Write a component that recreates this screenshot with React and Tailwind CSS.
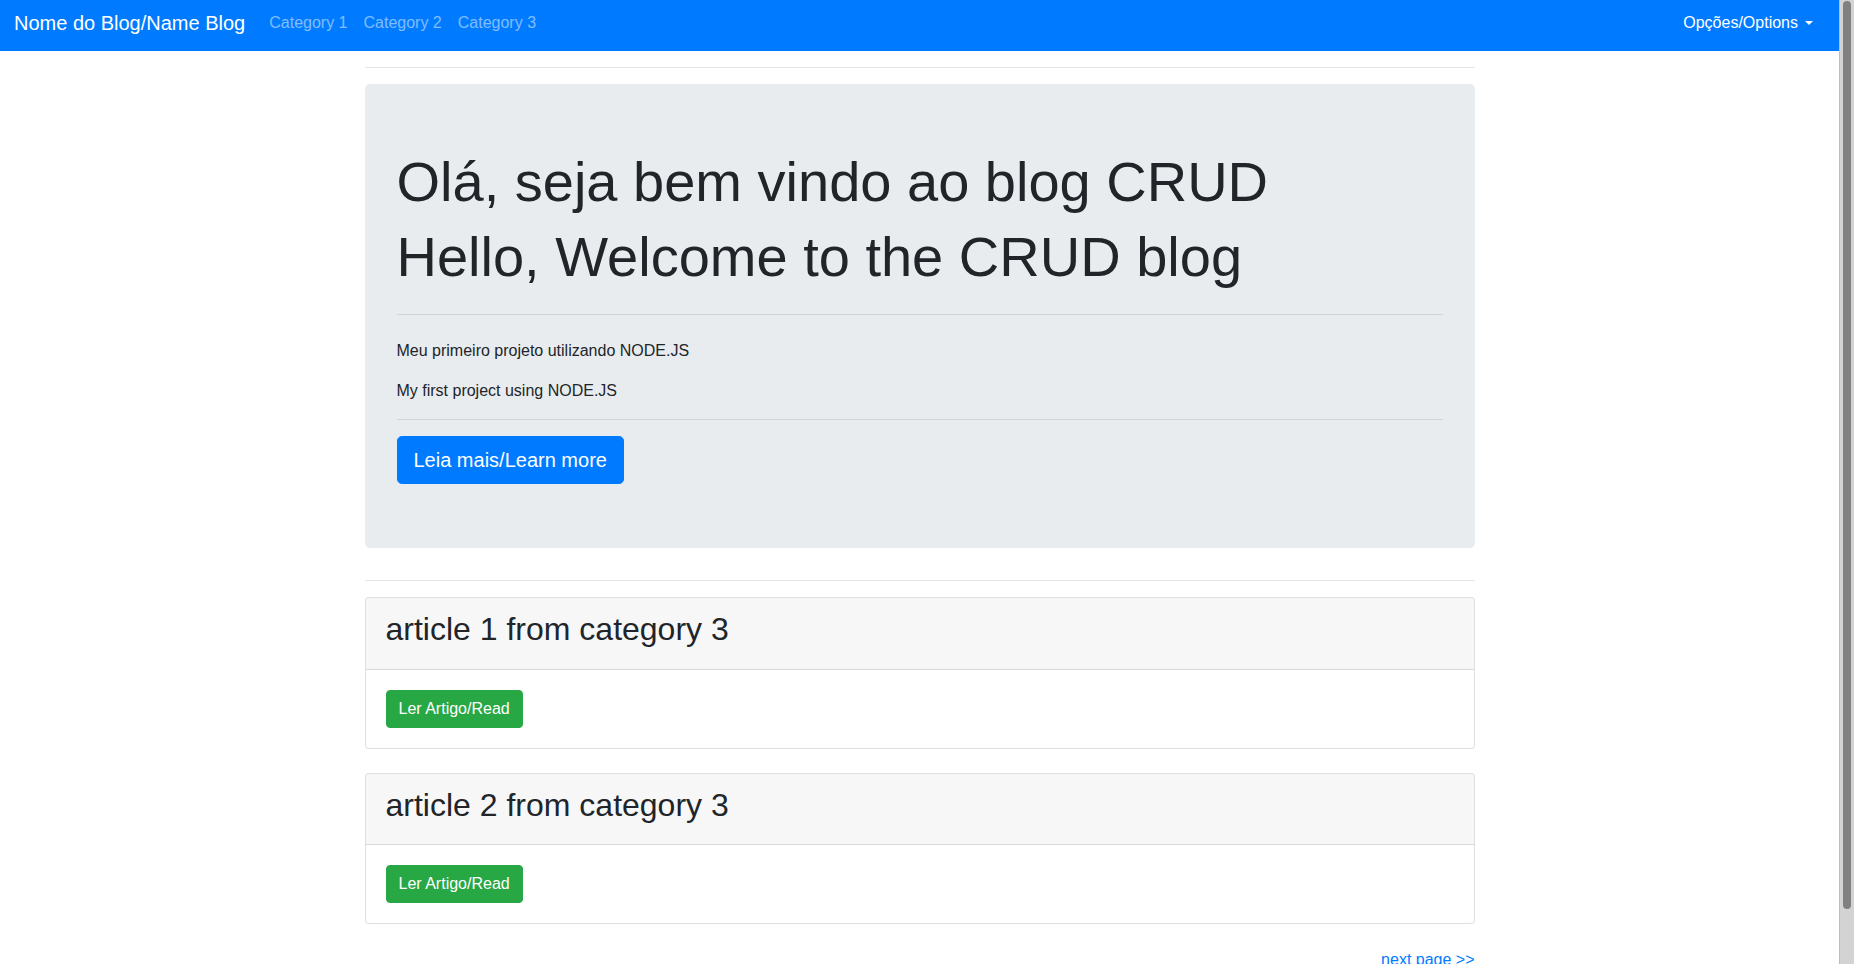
const categories = ["Category 1", "Category 2", "Category 3"]

const articles = [
  { id: 1, title: "article 1 from category 3" },
  { id: 2, title: "article 2 from category 3" },
]

const Navbar = () => (
  <nav className="flex h-[51px] items-start justify-between bg-[#007bff] pl-[14px] pr-[18px] pt-[8px]">
    <div className="flex h-[30px] items-center">
      <a href="#" className="mr-4 text-[20px] leading-[30px] text-white">
        Nome do Blog/Name Blog
      </a>
      <ul className="flex">
        {categories.map((c) => (
          <li key={c}>
            <a href="#" className="block px-2 text-base leading-6 text-white/50">
              {c}
            </a>
          </li>
        ))}
      </ul>
    </div>
    <a href="#" className="flex h-[30px] items-center px-2 text-base leading-6 text-white">
      Opções/Options
      <span className="ml-[7px] h-0 w-0 border-x-[4.8px] border-t-[4.8px] border-x-transparent border-t-white" />
    </a>
  </nav>
)

const ArticleCard = ({ title }) => (
  <div className="mb-6 rounded-[4px] border border-black/[.125] bg-white">
    <div className="rounded-t-[3px] border-b border-black/[.125] bg-black/[.03] px-5 py-3">
      <h2 className="mb-2 text-[32px] font-normal leading-[1.2]">{title}</h2>
    </div>
    <div className="p-5">
      <a
        href="#"
        className="inline-block rounded-[4px] border border-[#28a745] bg-[#28a745] px-3 py-1.5 text-base leading-6 text-white"
      >
        Ler Artigo/Read
      </a>
    </div>
  </div>
)

// browser scrollbar, as it shows in the screenshot
const Scrollbar = () => (
  <div className="sticky top-0 flex h-screen w-[15px] shrink-0 self-start justify-center border-l border-[#bdbdbd] bg-[#d3d3d3] pt-[1px]">
    <div className="h-[908px] w-[8px] rounded-[4px] bg-[#808080]" />
  </div>
)

export default function App() {
  return (
    <div className="flex min-h-screen bg-white font-['Liberation_Sans',Arial,sans-serif] text-[#212529]">
      <div className="min-w-0 flex-1">
        <Navbar />

        <div className="mx-auto max-w-[1140px] px-[15px] pb-12">
          <hr className="my-4 border-t border-black/10" />

          <div className="mb-8 rounded-[4.8px] bg-[#e9ecef] px-8 py-16">
            <h1 className="mb-2 text-[56px] font-normal leading-[1.2]">
              Olá, seja bem vindo ao blog CRUD
            </h1>
            <h1 className="text-[56px] font-normal leading-[1.2]">
              Hello, Welcome to the CRUD blog
            </h1>
            <hr className="my-6 border-t border-black/10" />
            <p className="mb-4 text-base leading-6">Meu primeiro projeto utilizando NODE.JS</p>
            <p className="text-base leading-6">My first project using NODE.JS</p>
            <hr className="my-4 border-t border-black/10" />
            <a
              href="#"
              className="inline-block rounded-[4.8px] border border-[#007bff] bg-[#007bff] px-4 py-2 text-[20px] leading-[30px] text-white"
            >
              Leia mais/Learn more
            </a>
          </div>

          <hr className="mb-4 border-t border-black/10" />

          {articles.map((a) => (
            <ArticleCard key={a.id} title={a.title} />
          ))}

          <div className="text-right">
            <a href="#" className="text-base leading-6 text-[#007bff]">
              next page &gt;&gt;
            </a>
          </div>
        </div>
      </div>
      <Scrollbar />
    </div>
  )
}
